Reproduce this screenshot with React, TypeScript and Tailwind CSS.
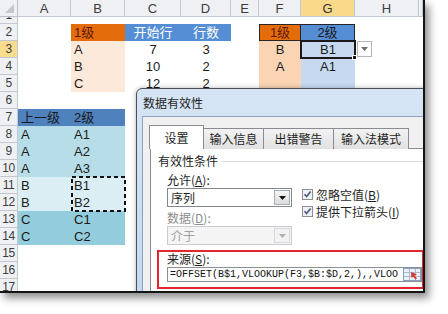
import React from 'react';

type Spec = { t?: string; c?: string };

const colLabels = ['', 'A', 'B', 'C', 'D', 'E', 'F', 'G', 'H', ''];

// sheet cells keyed by row number, then column index (1 = A)
const data: Record<number, Record<number, Spec>> = {
  2: {
    2: { t: '1级', c: 'bg-[#e46c0a] text-[#5e1a00] pl-[3px]' },
    3: { t: '开始行', c: 'bg-[#558ed5] text-white justify-center' },
    4: { t: '行数', c: 'bg-[#558ed5] text-white justify-center' },
    6: { t: '1级', c: 'bg-[#e46c0a] text-[#5e1a00] justify-center border border-[#262626]' },
    7: { t: '2级', c: 'bg-[#558ed5] text-[#0f2748] justify-center border-y border-r border-[#262626]' },
  },
  3: {
    2: { t: 'A', c: 'bg-[#fde9d9] pl-[3px]' },
    3: { t: '7', c: 'justify-center' },
    4: { t: '3', c: 'justify-center' },
    6: { t: 'B', c: 'bg-[#fbd4b4] justify-center' },
    7: { t: 'B1', c: 'bg-[#c6d9f1] justify-center' },
  },
  4: {
    2: { t: 'B', c: 'bg-[#fde9d9] pl-[3px]' },
    3: { t: '10', c: 'justify-center' },
    4: { t: '2', c: 'justify-center' },
    6: { t: 'A', c: 'bg-[#fbd4b4] justify-center' },
    7: { t: 'A1', c: 'bg-[#c6d9f1] justify-center' },
  },
  5: {
    2: { t: 'C', c: 'bg-[#fde9d9] pl-[3px]' },
    3: { t: '12', c: 'justify-center' },
    4: { t: '2', c: 'justify-center' },
    6: { c: 'bg-[#fbd4b4]' },
    7: { c: 'bg-[#c6d9f1]' },
  },
  7: {
    1: { t: '上一级', c: 'bg-[#4f81bd] text-[#0f2342] pl-[3px]' },
    2: { t: '2级', c: 'bg-[#4f81bd] text-[#0f2342] pl-[3px]' },
  },
  8: { 1: { t: 'A', c: 'bg-[#b7dee8] pl-[3px]' }, 2: { t: 'A1', c: 'bg-[#b7dee8] pl-[3px]' } },
  9: { 1: { t: 'A', c: 'bg-[#b7dee8] pl-[3px]' }, 2: { t: 'A2', c: 'bg-[#b7dee8] pl-[3px]' } },
  10: { 1: { t: 'A', c: 'bg-[#b7dee8] pl-[3px]' }, 2: { t: 'A3', c: 'bg-[#b7dee8] pl-[3px]' } },
  11: { 1: { t: 'B', c: 'bg-[#dbeef4] pl-[3px]' }, 2: { t: 'B1', c: 'bg-[#dbeef4] pl-[3px]' } },
  12: { 1: { t: 'B', c: 'bg-[#dbeef4] pl-[3px]' }, 2: { t: 'B2', c: 'bg-[#dbeef4] pl-[3px]' } },
  13: { 1: { t: 'C', c: 'bg-[#93cddd] pl-[3px]' }, 2: { t: 'C1', c: 'bg-[#93cddd] pl-[3px]' } },
  14: { 1: { t: 'C', c: 'bg-[#93cddd] pl-[3px]' }, 2: { t: 'C2', c: 'bg-[#93cddd] pl-[3px]' } },
};

function Sheet() {
  const cells: React.ReactNode[] = [];
  for (let r = 0; r <= 17; r++) {
    for (let c = 0; c <= 9; c++) {
      const key = `${r}-${c}`;
      if (r === 0 && c === 0) {
        cells.push(
          <div key={key} className="bg-[#eef0f3] border-r border-b border-[#b9c0c9] flex items-end justify-end">
            <svg width="11" height="11" viewBox="0 0 11 11" className="mr-[2px] mb-[2px]">
              <polygon points="10,1 10,10 1,10" fill="#c3c8cf" />
            </svg>
          </div>
        );
      } else if (r === 0) {
        const hot = c === 7;
        cells.push(
          <div
            key={key}
            className={`${hot ? 'bg-[#f8da8a] text-[#333]' : 'bg-[#eef0f3] text-[#3c3c3c]'} border-r border-b border-[#c2c8d0] flex items-center justify-center`}
          >
            {colLabels[c]}
          </div>
        );
      } else if (c === 0) {
        const hot = r === 3;
        cells.push(
          <div
            key={key}
            className={`${hot ? 'bg-[#f9dc8e]' : 'bg-[#eef0f3]'} border-r border-b border-[#c2c8d0] overflow-hidden flex ${r === 1 ? 'items-end' : 'items-center'} text-[#3c3c3c] text-[12px] tracking-[-0.5px]`}
          >
            <div className="w-full h-[17px] shrink-0 flex items-center justify-center">{r}</div>
          </div>
        );
      } else {
        const s = data[r]?.[c];
        cells.push(
          <div
            key={key}
            className={`flex items-center overflow-hidden whitespace-nowrap text-[#1a1a1a] ${s?.c ?? 'bg-white'}`}
          >
            {s?.t}
          </div>
        );
      }
    }
  }
  return (
    <div className="grid grid-cols-[18px_53px_54px_56px_50px_28px_42px_54px_64px_4px] grid-rows-[17px_7px_repeat(15,17px)_17px] text-[13px] leading-none font-['Liberation_Sans','Noto_Sans_CJK_SC',sans-serif]">
      {cells}
    </div>
  );
}

function Arrow({ color }: { color: string }) {
  return (
    <svg width="7" height="4" viewBox="0 0 7 4">
      <polygon points="0,0 7,0 3.5,4" fill={color} />
    </svg>
  );
}

function Check() {
  return (
    <svg width="11" height="11" viewBox="0 0 11 11" className="shrink-0">
      <rect x="0.5" y="0.5" width="10" height="10" fill="#eef1f5" stroke="#8c8e90" />
      <path d="M2.5 5.2 L4.6 7.6 L8.6 2.6" stroke="#4c5f7e" strokeWidth="1.6" fill="none" />
    </svg>
  );
}

function Dialog() {
  return (
    <div className="absolute left-[136px] top-[88px] w-[310px] h-[215px] rounded-t-[6px] border border-[#4b5058] bg-[linear-gradient(180deg,#d6e5f5,#c3d8f0)] shadow-[0_0_5px_rgba(0,0,0,0.3)] flex flex-col font-['Noto_Sans_CJK_SC',sans-serif] text-[12px] text-[#1e1e1e]">
      <div className="h-[27px] shrink-0 pl-[6px] flex items-center">数据有效性</div>
      <div className="ml-[5px] flex-1 border-l border-t border-[#8da2ba] bg-[#f0f0f0] pl-[6px] pt-[8px]">
        {/* tabs */}
        <div className="flex items-end h-[24px]">
          <div className="relative z-10 w-[55px] h-[24px] bg-white border-l border-t border-r border-[#898c95] flex items-center justify-center">
            设置
          </div>
          <div className="w-[60px] h-[21px] bg-[linear-gradient(180deg,#f2f2f2,#e1e1e1)] border-t border-r border-[#898c95] flex items-center justify-center">
            输入信息
          </div>
          <div className="w-[70px] h-[21px] bg-[linear-gradient(180deg,#f2f2f2,#e1e1e1)] border-t border-r border-[#898c95] flex items-center justify-center">
            出错警告
          </div>
          <div className="w-[75px] h-[21px] bg-[linear-gradient(180deg,#f2f2f2,#e1e1e1)] border-t border-r border-[#898c95] flex items-center justify-center">
            输入法模式
          </div>
        </div>
        {/* panel */}
        <div className="ml-[1px] -mt-px h-[180px] border border-[#898c95] bg-white">
          <div className="flex items-center pl-[7px] pt-[4px] h-[20px] leading-[16px]">
            <span>有效性条件</span>
            <div className="flex-1 ml-[3px] border-t border-[#dadde2]" />
          </div>
          <div className="flex pl-[16px] mt-[3px]">
            <div className="w-[125px] shrink-0">
              <div className="h-[16px] leading-[16px]">
                允许(<span className="underline">A</span>):
              </div>
              <div className="h-[19px] border border-[#828790] bg-white flex items-center pl-[3px]">
                <span>序列</span>
                <div className="ml-auto mr-px w-[16px] h-[15px] border border-[#a6adb6] bg-[linear-gradient(180deg,#f5f5f5,#dcdcdc)] flex items-center justify-center">
                  <Arrow color="#111" />
                </div>
              </div>
              <div className="mt-[3px] h-[16px] leading-[16px] text-[#8d8d8d]">
                数据(<span className="underline">D</span>):
              </div>
              <div className="h-[19px] border border-[#c8cbcf] bg-[#f4f4f4] flex items-center pl-[3px] text-[#a0a0a0]">
                <span>介于</span>
                <div className="ml-auto mr-px w-[16px] h-[15px] border border-[#d6d8db] bg-[#f2f2f2] flex items-center justify-center">
                  <Arrow color="#b0b0b0" />
                </div>
              </div>
            </div>
            <div className="ml-[10px] pt-[14px]">
              <div className="h-[17px] flex items-center gap-[3px]">
                <Check />
                <span>
                  忽略空值(<span className="underline">B</span>)
                </span>
              </div>
              <div className="h-[17px] flex items-center gap-[3px]">
                <Check />
                <span>
                  提供下拉箭头(<span className="underline">I</span>)
                </span>
              </div>
            </div>
          </div>
          {/* highlighted source box */}
          <div className="ml-[6px] mt-[5px] w-[267px] border-2 border-[#e3262d] pb-[5px]">
            <div className="pl-[8px] h-[13px] leading-[13px]">
              来源(<span className="underline">S</span>):
            </div>
            <div className="ml-[8px] mt-[2px] h-[15px] border border-[#8a9099] bg-white flex items-center pl-[2px]">
              <span className="font-['Liberation_Mono',monospace] text-[10px] text-[#111] whitespace-nowrap">
                =OFFSET(B$1,VLOOKUP(F3,$B:$D,2,),,VLOO
              </span>
              <svg width="18" height="13" viewBox="0 0 18 13" className="ml-auto shrink-0">
                <rect x="0.5" y="0.5" width="17" height="12" fill="#eaf1fa" stroke="#8aa0bc" />
                <line x1="1" y1="4.5" x2="17" y2="4.5" stroke="#a9bbd2" />
                <line x1="1" y1="8.5" x2="17" y2="8.5" stroke="#a9bbd2" />
                <line x1="6.5" y1="1" x2="6.5" y2="12" stroke="#a9bbd2" />
                <line x1="12.5" y1="1" x2="12.5" y2="12" stroke="#a9bbd2" />
                <polygon points="8,4 14,6.5 11.5,7.5 14,10.5 12.5,11.5 10,8.5 8.5,10" fill="#d9342b" />
              </svg>
            </div>
          </div>
        </div>
      </div>
    </div>
  );
}

export default function App() {
  return (
    <div className="w-[448px] h-[314px] bg-white overflow-hidden">
      <div className="relative w-[425px] h-[293px] overflow-hidden border-r-2 border-b-2 border-[#141414] bg-white shadow-[4px_5px_8px_rgba(0,0,0,0.45)]">
        <Sheet />
        {/* active cell G3 */}
        <div className="absolute left-[300px] top-[40px] w-[56px] h-[19px] border-2 border-[#1a1a1a]" />
        <div className="absolute left-[352px] top-[55px] w-[5px] h-[5px] bg-[#1a1a1a] border border-white" />
        {/* validation dropdown button */}
        <div className="absolute left-[357px] top-[41px] w-[15px] h-[16px] border border-[#b5b5b5] bg-white flex items-center justify-center">
          <Arrow color="#6f6f6f" />
        </div>
        {/* copy marquee around B11:B12 */}
        <svg className="absolute left-[71px] top-[176px]" width="55" height="36" viewBox="0 0 55 36">
          <rect x="1" y="1" width="53" height="34" fill="none" stroke="#111" strokeWidth="2" strokeDasharray="4 3" />
        </svg>
        <Dialog />
      </div>
    </div>
  );
}
